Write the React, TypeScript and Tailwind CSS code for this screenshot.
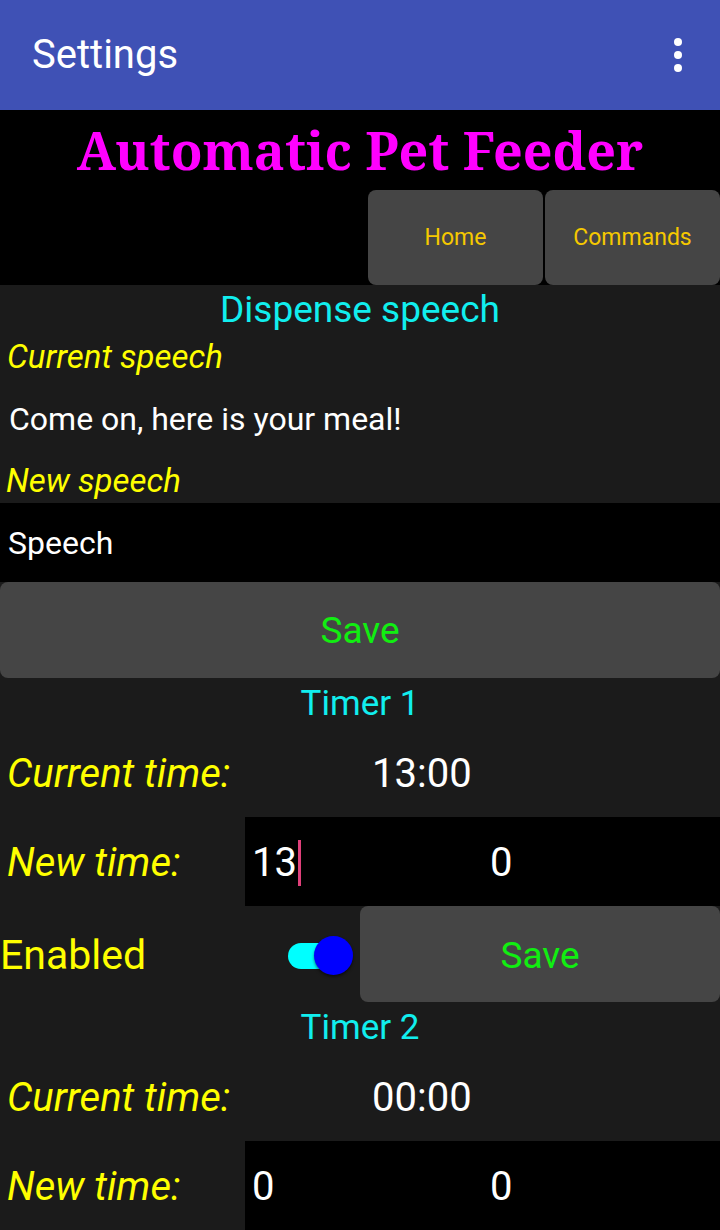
import React from "react";

const roboto = { fontFamily: "Roboto, 'Liberation Sans', sans-serif" };

function TimerBlock({ title, current, h, m, caret, withEnabled }: { title: string; current: string; h: string; m: string; caret?: boolean; withEnabled?: boolean }) {
  return (
    <div className="flex flex-col">
      <div className="flex h-[48px] items-center justify-center pt-[5px] text-[35px] text-[#11eeee]">{title}</div>
      <div className="flex h-[91px] items-center pt-[4px]">
        <span className="w-[372px] pl-[7px] text-[40px] italic text-[#ffff00]">Current time:</span>
        <span className="text-[40px] text-white">{current}</span>
      </div>
      <div className="flex h-[89px]">
        <div className="flex w-[245px] items-center pl-[7px] pt-[3px] text-[40px] italic text-[#ffff00]">New time:</div>
        <div className="flex flex-1 items-center bg-black pt-[3px] text-[40px] text-white">
          <span className="flex w-[245px] items-center pl-[7px]">
            {h}
            {caret && <span className="ml-[1px] inline-block h-[46px] w-[3px] bg-[#e0407a]" />}
          </span>
          <span>{m}</span>
        </div>
      </div>
      {withEnabled && (
        <div className="flex h-[96px] items-stretch">
          <div className="flex w-[360px] items-center pt-[3px]">
            <span className="flex-1 text-[41px] text-[#ffff00]">Enabled</span>
            <div className="relative mr-[7px] h-[26px] w-[65px]">
              <div className="absolute left-0 top-0 h-[26px] w-[44px] rounded-full bg-[#00ffff]" />
              <div className="absolute right-0 top-[-7px] h-[39px] w-[39px] rounded-full bg-[#0000ff] shadow-[0_2px_3px_rgba(0,0,0,0.5)]" />
            </div>
          </div>
          <div className="flex flex-1 items-center justify-center rounded-[8px] bg-[#454545] pt-[3px] text-[37px] text-[#11ee11]">Save</div>
        </div>
      )}
    </div>
  );
}

export default function App() {
  return (
    <div className="flex h-[1230px] w-[720px] flex-col overflow-hidden bg-[#1b1b1b]" style={roboto}>
      <div className="flex h-[110px] shrink-0 items-center justify-between bg-[#3f51b5] pl-[32px] pr-[38px]">
        <span className="text-[40px] text-white">Settings</span>
        <div className="flex flex-col gap-[5px]">
          <span className="h-[8px] w-[8px] rounded-full bg-white" />
          <span className="h-[8px] w-[8px] rounded-full bg-white" />
          <span className="h-[8px] w-[8px] rounded-full bg-white" />
        </div>
      </div>
      <div className="flex h-[175px] shrink-0 flex-col bg-black">
        <div
          className="flex h-[80px] items-center justify-center text-[52px] font-bold text-[#ff00ff]"
          style={{ fontFamily: "'Noto Serif', 'DejaVu Serif', serif" }}
        >
          Automatic Pet Feeder
        </div>
        <div className="flex flex-1 justify-end gap-[2px]">
          <div className="flex w-[175px] items-center justify-center rounded-[8px] bg-[#454545] pt-[2px] text-[23px] text-[#f5c800]">Home</div>
          <div className="flex w-[175px] items-center justify-center rounded-[8px] bg-[#454545] pt-[2px] text-[23px] text-[#f5c800]">Commands</div>
        </div>
      </div>
      <div className="flex h-[50px] items-center justify-center text-[37px] text-[#11eeee]">Dispense speech</div>
      <div className="flex h-[44px] items-center pl-[7px] text-[33px] italic text-[#ffff00]">Current speech</div>
      <div className="flex h-[80px] items-center pl-[9px] text-[32px] text-white">Come on, here is your meal!</div>
      <div className="flex h-[44px] items-center pl-[6px] text-[33px] italic text-[#ffff00]">New speech</div>
      <div className="flex h-[79px] items-center bg-black pl-[8px] text-[32px] text-white">Speech</div>
      <div className="flex h-[96px] items-center justify-center rounded-[8px] bg-[#454545] pt-[2px] text-[37px] text-[#11ee11]">Save</div>
      <TimerBlock title="Timer 1" current="13:00" h="13" m="0" caret withEnabled />
      <TimerBlock title="Timer 2" current="00:00" h="0" m="0" />
    </div>
  );
}
